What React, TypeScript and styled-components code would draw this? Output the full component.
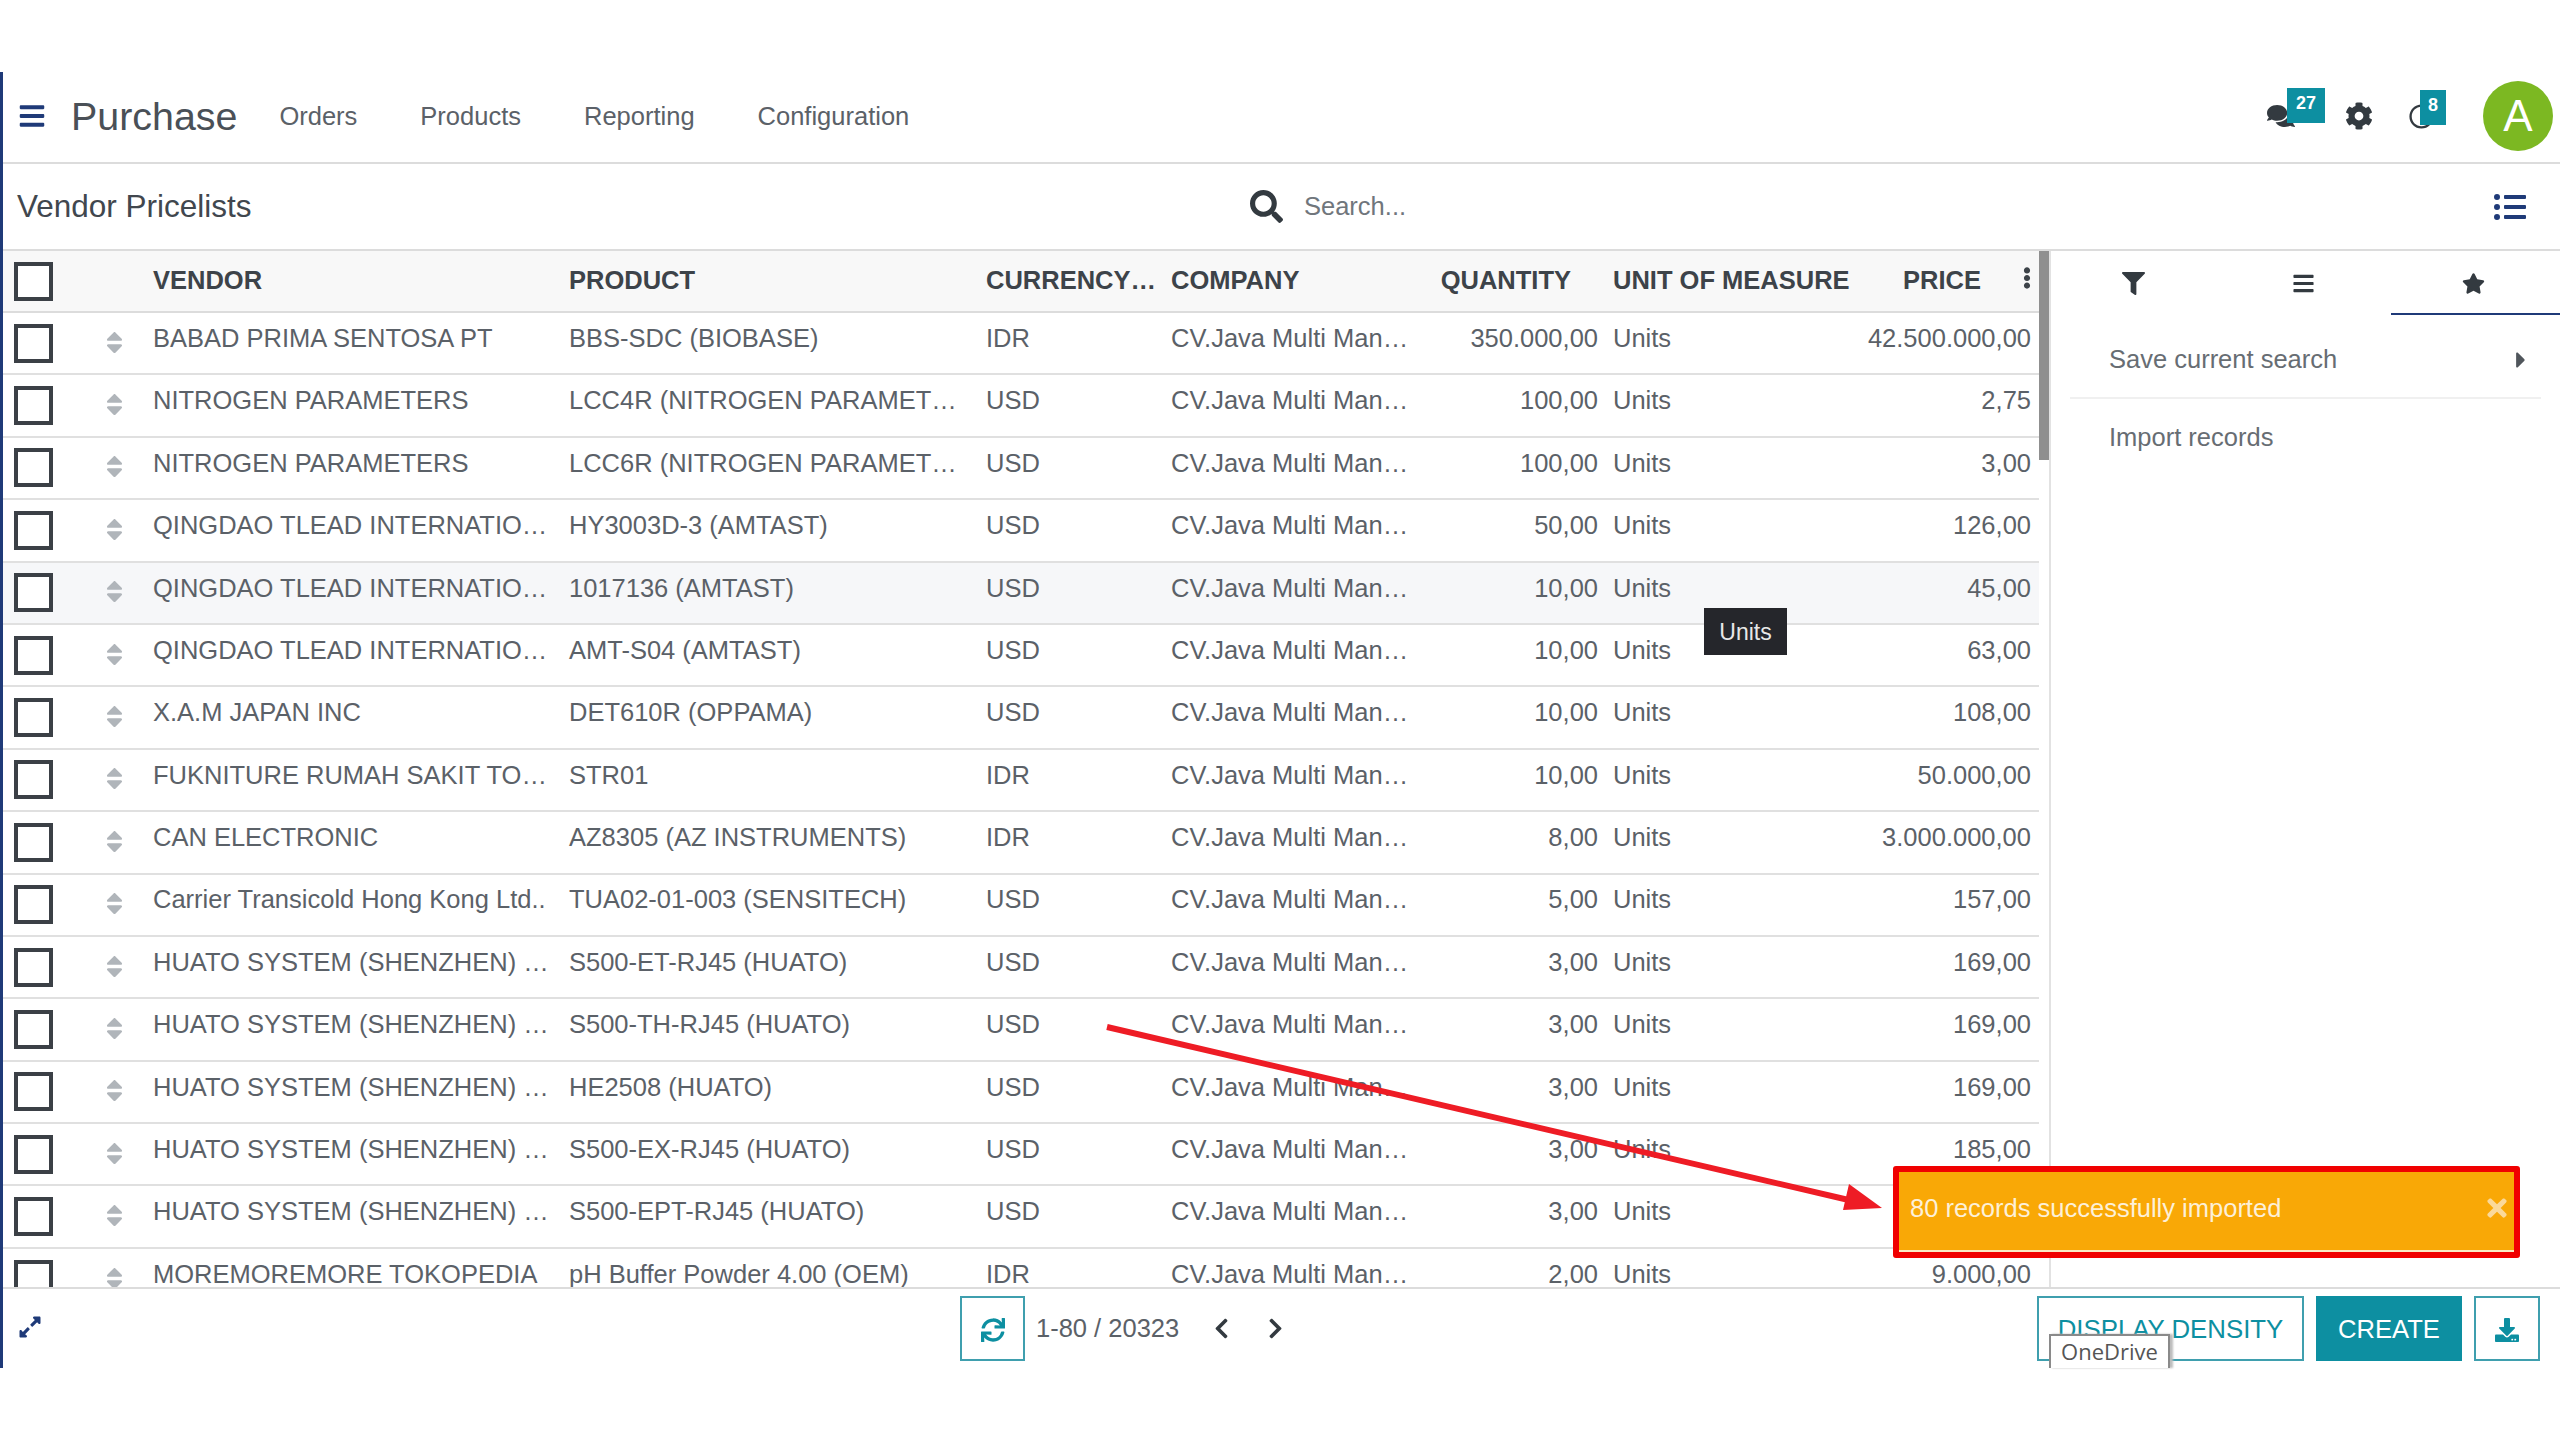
import React from 'react';
import styled, { createGlobalStyle } from 'styled-components';
import {
  FaBars, FaCog, FaComments, FaRegClock, FaSearch, FaListUl, FaFilter, FaStar, FaCaretRight,
  FaSort, FaEllipsisV, FaTimes, FaSync, FaChevronLeft, FaChevronRight, FaDownload, FaExpandAlt,
} from 'react-icons/fa';

const Global = createGlobalStyle`
  html, body { margin: 0; padding: 0; background: #fff; }
  body { font-family: "Liberation Sans", Arial, sans-serif; color: #5b6168; }
  * { box-sizing: border-box; }
`;

const NAVY = '#1f3a78';
const TEAL = '#0d8fa1';
const GRID = '150px 416px 416px 185px 260px 175px 254px 179px';

const Page = styled.div`
  width: 2560px;
  height: 1440px;
  padding-top: 72px;
  overflow: hidden;
  position: relative;
`;
const Frame = styled.div`
  width: 100%;
  height: 1296px;
  border-left: 3px solid ${NAVY};
  display: flex;
  flex-direction: column;
  position: relative;
`;
const TopBar = styled.header`
  height: 92px;
  flex: none;
  border-bottom: 2px solid #dcdcdc;
  display: flex;
  align-items: center;
  padding: 0 7px 2px 15px;
`;
const Burger = styled.span`
  color: ${NAVY};
  font-size: 28px;
  display: flex;
  margin-right: 25px;
`;
const AppName = styled.div`
  font-size: 39.4px;
  color: #4a5057;
  margin-right: 42px;
`;
const Menu = styled.nav`
  display: flex;
  gap: 63px;
  font-size: 25.5px;
  color: #5b6168;
`;
const Tray = styled.div`
  margin-left: auto;
  display: flex;
  align-items: center;
`;
const TrayIcon = styled.span<{ $w: number; $size: number }>`
  width: ${(p) => p.$w}px;
  font-size: ${(p) => p.$size}px;
  color: #333a40;
  display: flex;
  position: relative;
`;
const Badge = styled.span<{ $w: number; $left: number }>`
  position: absolute;
  left: ${(p) => p.$left}px;
  top: -14px;
  width: ${(p) => p.$w}px;
  height: 35px;
  background: ${TEAL};
  color: #fff;
  font-size: 18px;
  font-weight: 700;
  text-align: center;
  line-height: 30px;
`;
const Avatar = styled.div`
  width: 70px;
  height: 70px;
  border-radius: 50%;
  background: #7cb822;
  color: #fff;
  font-size: 44px;
  display: flex;
  align-items: center;
  justify-content: center;
`;
const ControlBar = styled.div`
  height: 87px;
  flex: none;
  border-bottom: 2px solid #dcdcdc;
  display: flex;
  align-items: center;
  padding: 0 34px 0 14px;
`;
const Title = styled.div`
  font-size: 31.5px;
  color: #41474e;
  width: 1233px;
`;
const SearchBox = styled.div`
  display: flex;
  align-items: center;
  gap: 21px;
  font-size: 25.5px;
  color: #70767c;
  svg { color: #333a40; font-size: 33px; }
`;
const ViewIcon = styled.span`
  margin-left: auto;
  color: ${NAVY};
  font-size: 32px;
  display: flex;
`;
const Body = styled.div`
  flex: 1;
  min-height: 0;
  display: flex;
`;
const Table = styled.div`
  flex: 1;
  min-width: 0;
  overflow: hidden;
`;
const HeadRow = styled.div`
  height: 62px;
  display: grid;
  grid-template-columns: ${GRID};
  align-items: center;
  background: #f8f8f8;
  border-bottom: 2px solid #dcdcdc;
  position: relative;
`;
const Row = styled.div<{ $hover?: boolean }>`
  height: 62.4px;
  display: grid;
  grid-template-columns: ${GRID};
  align-items: center;
  background: ${(p) => (p.$hover ? '#f6f7f9' : '#fff')};
  border-bottom: 2px solid #e0e0e0;
`;
const Check = styled.span`
  width: 39px;
  height: 39px;
  border: 4px solid #3b4046;
  display: block;
  background: #fff;
`;
const Lead = styled.div`
  display: flex;
  align-items: center;
  padding-left: 11px;
`;
const Handle = styled.span`
  margin-left: 48px;
  margin-top: -2px;
  color: #b0b5ba;
  font-size: 27px;
  display: flex;
`;
const HeadCell = styled.div<{ $pr?: number; $pl?: number; $right?: boolean }>`
  font-size: 25.5px;
  font-weight: 700;
  color: #3d4349;
  white-space: nowrap;
  text-align: ${(p) => (p.$right ? 'right' : 'left')};
  padding-right: ${(p) => p.$pr ?? 0}px;
  padding-left: ${(p) => p.$pl ?? 0}px;
  margin-left: ${(p) => (p.$right ? -20 : 0)}px;
  margin-top: -2px;
`;
const Cell = styled.div<{ $right?: boolean; $left?: number }>`
  font-size: 25.5px;
  white-space: nowrap;
  text-align: ${(p) => (p.$right ? 'right' : 'left')};
  padding-right: ${(p) => (p.$right ? 7 : 0)}px;
  padding-left: ${(p) => p.$left ?? 0}px;
  margin-top: -9.5px;
`;
const Dots = styled.span`
  position: absolute;
  right: 1px;
  top: 16px;
  font-size: 22px;
  color: #3d4349;
  display: flex;
`;
const Track = styled.div`
  width: 10px;
  flex: none;
`;
const Thumb = styled.div`
  height: 209px;
  background: #8f8f8f;
`;
const Side = styled.aside`
  width: 511px;
  flex: none;
  border-left: 2px solid #e2e2e2;
`;
const Tabs = styled.div`
  display: grid;
  grid-template-columns: 170px 170px 172px;
  height: 64px;
  margin-left: -3px;
`;
const Tab = styled.div<{ $active?: boolean }>`
  display: flex;
  align-items: center;
  justify-content: center;
  font-size: 23px;
  color: #333a40;
  padding-top: 2px;
  margin-left: ${(p) => (p.$active ? 3 : 0)}px;
  padding-right: ${(p) => (p.$active ? 5 : 0)}px;
  border-bottom: 2px solid ${(p) => (p.$active ? NAVY : 'transparent')};
`;
const SideList = styled.div`
  padding: 7px 19px 0;
`;
const SideItem = styled.div`
  height: 77px;
  padding: 0 7px 0 39px;
  display: flex;
  align-items: center;
  justify-content: space-between;
  font-size: 25.5px;
  color: #676d73;
  border-bottom: 2px solid #f0f0f0;
  &:last-child { border-bottom: 0; }
  svg { color: #50565c; font-size: 26px; }
`;
const Footer = styled.footer`
  height: 81px;
  flex: none;
  border-top: 2px solid #dcdcdc;
  display: flex;
  align-items: center;
  padding: 0 20px 0 15px;
  position: relative;
`;
const Expand = styled.span`
  color: ${NAVY};
  font-size: 24px;
  display: flex;
  width: 942px;
  margin-top: -3px;
`;
const OutlineBtn = styled.div<{ $w: number }>`
  width: ${(p) => p.$w}px;
  height: 65px;
  border: 2px solid #3f9fae;
  color: ${TEAL};
  display: flex;
  align-items: center;
  justify-content: center;
  padding-top: 2px;
  font-size: 25.8px;
  background: #fff;
  flex: none;
`;
const Pager = styled.div`
  margin-left: 11px;
  font-size: 25.5px;
  color: #5b6168;
  width: 174px;
`;
const Chevron = styled.span`
  color: #333a40;
  font-size: 23px;
  display: flex;
  width: 54px;
`;
const Actions = styled.div`
  margin-left: auto;
  display: flex;
  gap: 12px;
`;
const CreateBtn = styled.div`
  width: 146px;
  height: 65px;
  background: ${TEAL};
  color: #fff;
  font-size: 25.6px;
  padding-top: 2px;
  display: flex;
  align-items: center;
  justify-content: center;
`;
const Tooltip = styled.div`
  position: absolute;
  left: 1701px;
  top: 536px;
  width: 83px;
  height: 47px;
  padding-top: 2px;
  background: #25262b;
  color: #e8e8e8;
  font-size: 23px;
  display: flex;
  align-items: center;
  justify-content: center;
`;
const Toast = styled.div`
  position: absolute;
  left: 1890px;
  top: 1094px;
  width: 627px;
  height: 92px;
  background: #f9a806;
  border: 6px solid #f00000;
  border-radius: 3px;
  box-shadow: inset 0 -2px 0 #fbe9c4;
  display: flex;
  align-items: center;
  justify-content: space-between;
  padding: 0 3px 8px 11px;
  color: #fdf0d8;
  font-size: 25.5px;
  svg { font-size: 28px; color: #fbd99a; }
`;
const Arrow = styled.svg`
  position: absolute;
  left: 0;
  top: 0;
  pointer-events: none;
`;
const OneDrive = styled.div`
  position: absolute;
  left: 2046px;
  top: 1262px;
  width: 121px;
  height: 34px;
  background: #fff;
  border: 2px solid #8a8a8a;
  border-bottom: 0;
  box-shadow: 3px 0 2px #bdbdbd;
  font-family: "Open Sans", "Noto Sans", sans-serif;
  font-size: 22px;
  color: #555;
  text-align: center;
  line-height: 30px;
`;

const VH = 'HUATO SYSTEM (SHENZHEN) …';
const VQ = 'QINGDAO TLEAD INTERNATIO…';
const rows: [string, string, string, string, string][] = [
  ['BABAD PRIMA SENTOSA PT', 'BBS-SDC (BIOBASE)', 'IDR', '350.000,00', '42.500.000,00'],
  ['NITROGEN PARAMETERS', 'LCC4R (NITROGEN PARAMET…', 'USD', '100,00', '2,75'],
  ['NITROGEN PARAMETERS', 'LCC6R (NITROGEN PARAMET…', 'USD', '100,00', '3,00'],
  [VQ, 'HY3003D-3 (AMTAST)', 'USD', '50,00', '126,00'],
  [VQ, '1017136 (AMTAST)', 'USD', '10,00', '45,00'],
  [VQ, 'AMT-S04 (AMTAST)', 'USD', '10,00', '63,00'],
  ['X.A.M JAPAN INC', 'DET610R (OPPAMA)', 'USD', '10,00', '108,00'],
  ['FUKNITURE RUMAH SAKIT TO…', 'STR01', 'IDR', '10,00', '50.000,00'],
  ['CAN ELECTRONIC', 'AZ8305 (AZ INSTRUMENTS)', 'IDR', '8,00', '3.000.000,00'],
  ['Carrier Transicold Hong Kong Ltd..', 'TUA02-01-003 (SENSITECH)', 'USD', '5,00', '157,00'],
  [VH, 'S500-ET-RJ45 (HUATO)', 'USD', '3,00', '169,00'],
  [VH, 'S500-TH-RJ45 (HUATO)', 'USD', '3,00', '169,00'],
  [VH, 'HE2508 (HUATO)', 'USD', '3,00', '169,00'],
  [VH, 'S500-EX-RJ45 (HUATO)', 'USD', '3,00', '185,00'],
  [VH, 'S500-EPT-RJ45 (HUATO)', 'USD', '3,00', ''],
  ['MOREMOREMORE TOKOPEDIA', 'pH Buffer Powder 4.00 (OEM)', 'IDR', '2,00', '9.000,00'],
];

export default function App() {
  return (
    <Page>
      <Global />
      <Frame>
        <TopBar>
          <Burger><FaBars /></Burger>
          <AppName>Purchase</AppName>
          <Menu>
            <span>Orders</span><span>Products</span><span>Reporting</span><span>Configuration</span>
          </Menu>
          <Tray>
            <TrayIcon $w={78} $size={28}><FaComments /><Badge $w={38} $left={20}>27</Badge></TrayIcon>
            <TrayIcon $w={64} $size={28}><FaCog /></TrayIcon>
            <TrayIcon $w={74} $size={25}><FaRegClock /><Badge $w={26} $left={11}>8</Badge></TrayIcon>
            <Avatar>A</Avatar>
          </Tray>
        </TopBar>
        <ControlBar>
          <Title>Vendor Pricelists</Title>
          <SearchBox><FaSearch /><span>Search...</span></SearchBox>
          <ViewIcon><FaListUl /></ViewIcon>
        </ControlBar>
        <Body>
          <Table>
            <HeadRow>
              <Lead><Check /></Lead>
              <HeadCell>VENDOR</HeadCell>
              <HeadCell>PRODUCT</HeadCell>
              <HeadCell $pl={1}>CURRENCY…</HeadCell>
              <HeadCell $pl={1}>COMPANY</HeadCell>
              <HeadCell $right $pr={34}>QUANTITY</HeadCell>
              <HeadCell $pl={8}>UNIT OF MEASURE</HeadCell>
              <HeadCell $right $pr={57}>PRICE</HeadCell>
              <Dots><FaEllipsisV /></Dots>
            </HeadRow>
            {rows.map((r, i) => (
              <Row key={i} $hover={i === 4}>
                <Lead><Check /><Handle><FaSort /></Handle></Lead>
                <Cell>{r[0]}</Cell>
                <Cell>{r[1]}</Cell>
                <Cell $left={1}>{r[2]}</Cell>
                <Cell $left={1}>CV.Java Multi Man…</Cell>
                <Cell $right>{r[3]}</Cell>
                <Cell $left={8}>Units</Cell>
                <Cell $right>{r[4]}</Cell>
              </Row>
            ))}
          </Table>
          <Track><Thumb /></Track>
          <Side>
            <Tabs>
              <Tab><FaFilter /></Tab>
              <Tab><FaBars /></Tab>
              <Tab $active><FaStar /></Tab>
            </Tabs>
            <SideList>
              <SideItem><span>Save current search</span><FaCaretRight /></SideItem>
              <SideItem><span>Import records</span></SideItem>
            </SideList>
          </Side>
        </Body>
        <Footer>
          <Expand><FaExpandAlt /></Expand>
          <OutlineBtn $w={65}><FaSync size={24} /></OutlineBtn>
          <Pager>1-80 / 20323</Pager>
          <Chevron><FaChevronLeft /></Chevron>
          <Chevron><FaChevronRight /></Chevron>
          <Actions>
            <OutlineBtn $w={267}>DISPLAY DENSITY</OutlineBtn>
            <CreateBtn>CREATE</CreateBtn>
            <OutlineBtn $w={66}><FaDownload size={24} /></OutlineBtn>
          </Actions>
        </Footer>
        <Tooltip>Units</Tooltip>
        <Arrow width="2560" height="1296" viewBox="0 0 2560 1296">
          <line x1="1104" y1="955" x2="1850" y2="1129" stroke="#ee1c25" strokeWidth="6" />
          <polygon points="1879,1136 1846,1112 1840,1138" fill="#ee1c25" />
        </Arrow>
        <Toast><span>80 records successfully imported</span><FaTimes /></Toast>
        <OneDrive>OneDrive</OneDrive>
      </Frame>
    </Page>
  );
}
